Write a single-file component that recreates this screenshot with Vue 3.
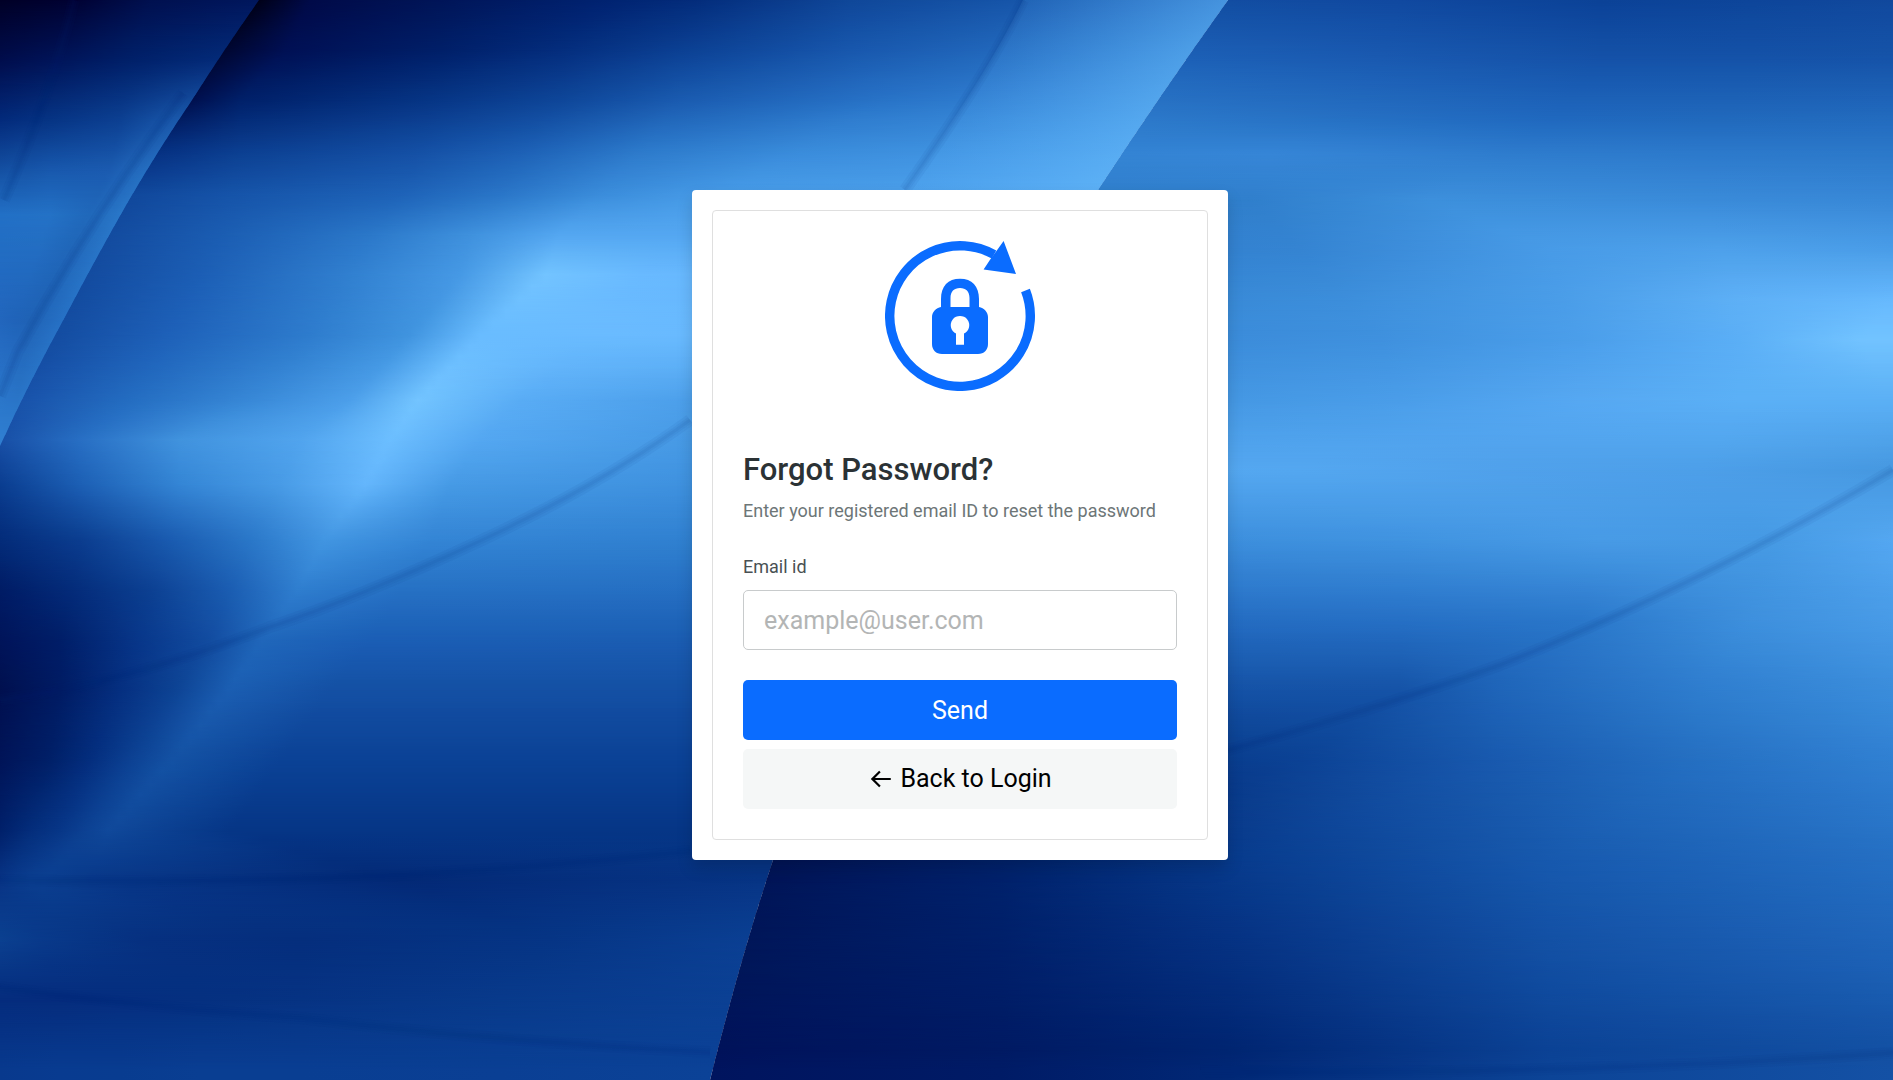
<script setup>
import { ref } from 'vue'

const email = ref('')

// Backdrop colours: each row lists [x, colour] stops along one height.
// Rows of one panel have equally many stops, so both the colour and the
// position of a stop can be carried smoothly from one row to the next.
const panels = [
  {
    id: 'main',
    clip: 'M0 0H1228Q1160 95 1098 190Q870 540 773 860Q740 960 710 1080H0Z',
    rows: [
      { y: 0, stops: [[250, '#000010'], [310, '#000a48'], [440, '#001558'], [600, '#002270'], [700, '#042d7c'], [850, '#0f4799'], [1228, '#2068be']] },
      { y: 50, stops: [[222, '#00062f'], [285, '#001054'], [440, '#001f68'], [560, '#042d7d'], [680, '#0b4093'], [850, '#1857ad'], [1200, '#2f7ed0']] },
      { y: 100, stops: [[190, '#000f4d'], [240, '#002069'], [430, '#063585'], [560, '#0e4699'], [680, '#1a5bb0'], [880, '#2873c7'], [1170, '#3b8ddc']] },
      { y: 150, stops: [[155, '#052f80'], [240, '#0b3e90'], [420, '#144fa4'], [520, '#1c5fb4'], [640, '#2c79ca'], [800, '#398bda'], [1130, '#4599e6']] },
      { y: 195, stops: [[125, '#10479b'], [230, '#1654a9'], [400, '#1e63b8'], [500, '#2a76c8'], [600, '#3b8ddb'], [720, '#489ce8'], [1100, '#4fa3ee']] },
      { y: 235, stops: [[105, '#134b9f'], [220, '#1b5db2'], [370, '#2b78c9'], [470, '#3f91dd'], [560, '#54a7f1'], [690, '#54a7f1'], [1060, '#55a9f2']] },
      { y: 275, stops: [[85, '#134b9f'], [200, '#1c5eb5'], [350, '#3180d0'], [460, '#4699e5'], [545, '#73c4ff'], [640, '#69baff'], [1000, '#5daff8']] },
      { y: 335, stops: [[60, '#144da2'], [170, '#1e61b9'], [310, '#2e7ccd'], [410, '#4094df'], [480, '#69bcff'], [600, '#6abbff'], [900, '#66b8fe']] },
      { y: 400, stops: [[15, '#1851a9'], [130, '#246dc1'], [250, '#3888d7'], [350, '#4c9fea'], [418, '#73c4ff'], [520, '#59acf5'], [800, '#4497e3']] },
      { y: 440, stops: [[0, '#184fa6'], [80, '#286fc4'], [180, '#4193de'], [300, '#51a4ee'], [390, '#6cbeff'], [480, '#54a7f1'], [800, '#4093df']] },
      { y: 485, stops: [[0, '#0a3d90'], [80, '#1c5fb4'], [180, '#3485d5'], [280, '#489be6'], [365, '#64b6fc'], [450, '#469ae5'], [800, '#3b8ddc']] },
      { y: 540, stops: [[0, '#042c7a'], [80, '#0b3d8f'], [170, '#1a5bb0'], [250, '#2a77c8'], [325, '#4296e2'], [430, '#3485d5'], [780, '#2f7fcf']] },
      { y: 590, stops: [[0, '#001c65'], [70, '#042b79'], [150, '#0c4092'], [230, '#1b5db2'], [297, '#2f7ecf'], [400, '#2671c4'], [760, '#256fc2']] },
      { y: 640, stops: [[0, '#00145a'], [60, '#001e68'], [140, '#08378a'], [210, '#124ca0'], [262, '#2067bb'], [370, '#1b5eb5'], [760, '#1b5db2']] },
      { y: 690, stops: [[0, '#00104f'], [60, '#001b63'], [120, '#052f80'], [175, '#0d4394'], [228, '#1b5eb2'], [330, '#1450a4'], [760, '#1450a4']] },
      { y: 760, stops: [[0, '#001458'], [50, '#002068'], [90, '#042e7e'], [130, '#0c4193'], [172, '#1452a4'], [280, '#0b4296'], [760, '#0b4296']] },
      { y: 830, stops: [[0, '#00206a'], [30, '#042d7b'], [60, '#073687'], [85, '#0c4193'], [108, '#10499b'], [230, '#063686'], [760, '#063686']] },
      { y: 880, stops: [[0, '#083485'], [15, '#093a8b'], [30, '#0b3f90'], [45, '#0b3f90'], [90, '#083788'], [400, '#032976'], [760, '#073585']] },
      { y: 940, stops: [[0, '#0b4090'], [40, '#093a8b'], [90, '#073585'], [150, '#063080'], [300, '#052e7d'], [550, '#063585'], [760, '#0b4094']] },
      { y: 1000, stops: [[0, '#052c7d'], [60, '#052c7d'], [120, '#052e7f'], [200, '#053080'], [300, '#063383'], [500, '#083a8b'], [730, '#0b4094']] },
      { y: 1080, stops: [[0, '#083b90'], [60, '#093e93'], [120, '#093e93'], [200, '#0a4095'], [300, '#0a4095'], [500, '#0a4095'], [710, '#0b4297']] }
    ]
  },
  {
    id: 'corner',
    clip: 'M0 0H259Q225 48 192 100Q160 147 129 200Q98 254 67 313Q28 384 0 446Z',
    rows: [
      { y: 0, stops: [[0, '#000026'], [75, '#000233'], [150, '#00104f'], [259, '#00175d']] },
      { y: 60, stops: [[0, '#000d4c'], [60, '#00155a'], [130, '#002069'], [220, '#042b79']] },
      { y: 120, stops: [[0, '#032a7b'], [50, '#063484'], [120, '#0c4092'], [180, '#1b5aad']] },
      { y: 170, stops: [[0, '#1450a2'], [50, '#1858ad'], [110, '#1b5bb0'], [150, '#2670c2']] },
      { y: 215, stops: [[0, '#2270c6'], [50, '#2472c6'], [90, '#2068ba'], [125, '#2b7acb']] },
      { y: 320, stops: [[0, '#2266bd'], [15, '#2063b9'], [30, '#1f62b5'], [65, '#2772c6']] },
      { y: 446, stops: [[0, '#3080d2'], [5, '#3080d2'], [10, '#3080d2'], [20, '#3080d2']] }
    ]
  },
  {
    id: 'right',
    clip: 'M1228 0H1893V1080H710Q740 960 773 860Q870 540 1098 190Q1160 95 1228 0Z',
    rows: [
      { y: 0, stops: [[1228, '#124da2'], [1400, '#1049a0'], [1600, '#0b4297'], [1750, '#0d459a'], [1893, '#11499d']] },
      { y: 60, stops: [[1190, '#1d61b7'], [1380, '#1a5ab1'], [1600, '#1552a9'], [1750, '#1553a9'], [1893, '#1654aa']] },
      { y: 120, stops: [[1150, '#2c79ca'], [1350, '#2671c4'], [1550, '#2069bf'], [1720, '#216abd'], [1893, '#236cbf']] },
      { y: 155, stops: [[1120, '#3484d4'], [1270, '#3686d7'], [1500, '#2f7dce'], [1700, '#2d7acc'], [1893, '#2c79ca']] },
      { y: 200, stops: [[1090, '#2f7ecb'], [1250, '#307fcc'], [1430, '#3d90dc'], [1700, '#3a8bd9'], [1893, '#3888d7']] },
      { y: 250, stops: [[1060, '#317fcd'], [1300, '#3584d2'], [1550, '#489be7'], [1720, '#4ea1eb'], [1893, '#4a9de8']] },
      { y: 300, stops: [[1040, '#3484d2'], [1340, '#3c8edb'], [1560, '#4a9de8'], [1740, '#5eb0f6'], [1893, '#67b9fd']] },
      { y: 340, stops: [[1040, '#3887d6'], [1380, '#3f91de'], [1580, '#4b9eea'], [1740, '#5baff6'], [1860, '#72c3ff']] },
      { y: 400, stops: [[1040, '#3f92dd'], [1400, '#4a9de9'], [1580, '#56a8f2'], [1740, '#5bb0f6'], [1893, '#5bb0f5']] },
      { y: 470, stops: [[1040, '#56a9f2'], [1300, '#54a7f0'], [1500, '#50a1eb'], [1700, '#4d9fe9'], [1893, '#4698e0']] },
      { y: 540, stops: [[1040, '#3a8bda'], [1400, '#4093e0'], [1600, '#489be6'], [1770, '#469ae4'], [1893, '#54a7f1']] },
      { y: 620, stops: [[1040, '#2369bf'], [1400, '#2670c5'], [1580, '#2a77ca'], [1750, '#3e90dd'], [1893, '#489be7']] },
      { y: 690, stops: [[1040, '#1451a5'], [1400, '#1553a7'], [1500, '#1f65b9'], [1700, '#2e7dce'], [1893, '#3b8ddb']] },
      { y: 760, stops: [[1040, '#06337f'], [1300, '#0b4295'], [1500, '#195aaf'], [1700, '#2570c2'], [1893, '#3080d2']] },
      { y: 860, stops: [[770, '#001457'], [1000, '#00226c'], [1228, '#073a8c'], [1550, '#1759ae'], [1893, '#256fc3']] },
      { y: 960, stops: [[735, '#001659'], [1000, '#001f69'], [1228, '#053080'], [1550, '#124fa3'], [1893, '#1d62b7']] },
      { y: 1050, stops: [[715, '#00125a'], [1000, '#001a63'], [1228, '#002571'], [1550, '#0b4295'], [1893, '#1351a4']] },
      { y: 1080, stops: [[710, '#001560'], [1000, '#001c68'], [1228, '#022978'], [1550, '#0d4598'], [1893, '#1551a5']] }
    ]
  }
]

const STEP = 12

const channels = (hex) => [1, 3, 5].map((i) => parseInt(hex.slice(i, i + 2), 16))
const mix = (a, b, t) => a + (b - a) * t
const mixColour = (a, b, t) => {
  const to = channels(b)
  return `rgb(${channels(a).map((c, i) => Math.round(mix(c, to[i], t))).join(' ')})`
}

const sheets = panels.map(({ id, clip, rows }) => {
  const bands = []
  rows.slice(0, -1).forEach((row, r) => {
    const next = rows[r + 1]
    const count = Math.ceil((next.y - row.y) / STEP)
    for (let s = 0; s < count; s++) {
      const t = s / count
      const stops = row.stops.map(([x, colour], i) => ({
        x: mix(x, next.stops[i][0], t),
        colour: mixColour(colour, next.stops[i][1], t)
      }))
      bands.push({ y: Math.round(mix(row.y, next.y, t)), stops })
    }
  })
  return {
    id,
    clip,
    bands: bands.map((band, i) => {
      const x1 = band.stops[0].x
      const x2 = band.stops[band.stops.length - 1].x
      return {
        key: `${id}-${i}`,
        x1,
        x2,
        y: band.y,
        from: i ? bands[i - 1].y : band.y,
        until: i < bands.length - 1 ? bands[i + 1].y : 1080,
        stops: band.stops.map(({ x, colour }) => ({ offset: (x - x1) / (x2 - x1), colour }))
      }
    })
  }
})

const creases = [
  'M690 420Q600 485 480 541T270 627Q130 682 0 700',
  'M0 880Q200 884 400 875Q560 866 690 851',
  'M0 987Q120 1005 300 1018Q500 1042 710 1052',
  'M1023 0Q990 70 905 190',
  'M74 0Q52 90 4 200',
  'M183 93Q90 220 18 351L0 396',
  'M1893 470Q1700 585 1500 665Q1380 708 1228 750',
  'M1200 1071Q1560 1076 1893 1053'
]
</script>

<template>
  <main class="page">
    <svg class="backdrop" viewBox="0 0 1893 1080" preserveAspectRatio="xMidYMid slice" aria-hidden="true">
      <defs>
        <linearGradient id="fade" x1="0" y1="0" x2="0" y2="1">
          <stop offset="0" stop-color="#fff" stop-opacity="0" />
          <stop offset="1" stop-color="#fff" />
        </linearGradient>
        <mask id="fade-in" class="fade-in" maskContentUnits="objectBoundingBox" x="0" y="0" width="1" height="1">
          <rect width="1" height="1" fill="url(#fade)" />
        </mask>
        <linearGradient id="sheen" gradientUnits="userSpaceOnUse" x1="950" y1="60" x2="1120" y2="170">
          <stop offset="0" stop-color="#5db4ff" stop-opacity="0.08" />
          <stop offset="1" stop-color="#6cc0ff" stop-opacity="0.5" />
        </linearGradient>
        <template v-for="sheet in sheets" :key="sheet.id">
          <clipPath :id="`clip-${sheet.id}`"><path :d="sheet.clip" /></clipPath>
          <linearGradient
            v-for="band in sheet.bands"
            :id="band.key"
            :key="band.key"
            gradientUnits="userSpaceOnUse"
            :x1="band.x1"
            y1="0"
            :x2="band.x2"
            y2="0"
          >
            <stop v-for="(stop, i) in band.stops" :key="i" :offset="stop.offset" :stop-color="stop.colour" />
          </linearGradient>
        </template>
      </defs>
      <g v-for="sheet in sheets" :key="sheet.id" :clip-path="`url(#clip-${sheet.id})`">
        <template v-for="band in sheet.bands" :key="band.key">
          <rect
            v-if="band.y > band.from"
            x="0"
            :y="band.from"
            width="1893"
            :height="band.y - band.from"
            :fill="`url(#${band.key})`"
            mask="url(#fade-in)"
          />
          <rect x="0" :y="band.y" width="1893" :height="band.until - band.y" :fill="`url(#${band.key})`" />
        </template>
      </g>
      <path d="M1023 0H1228Q1160 95 1098 190H905Q990 70 1023 0Z" fill="url(#sheen)" />
      <g v-for="d in creases" :key="d" class="crease">
        <path :d="d" stroke-width="12" />
        <path :d="d" stroke-width="7" />
        <path :d="d" stroke-width="3" />
      </g>
    </svg>

    <section class="card">
      <form class="panel" @submit.prevent>
        <svg class="emblem" viewBox="0 0 150 150" aria-hidden="true">
          <path d="M140.5 49.5A70.3 70.3 0 1 1 109 13.5" fill="none" stroke="currentColor" stroke-width="9.4" />
          <path d="M118.6 0L131 33L98.6 28.5L105.7 17.7L112 9.3Z" fill="currentColor" />
          <path
            fill="currentColor"
            fill-rule="evenodd"
            d="M56 66V58C56 45 63 37.7 75 37.7S94 45 94 58V66C99 67 103 71 103 76V103C103 109 99 113 93 113H57C51 113 47 109 47 103V76C47 71 51 67 56 66ZM65.5 66H84.5V57C84.5 50.5 81 47 75 47S65.5 50.5 65.5 57ZM71 92.6V103.7H79V92.6A9.3 9.3 0 1 0 71 92.6Z"
          />
        </svg>
        <h1 class="title">Forgot Password?</h1>
        <p class="hint">Enter your registered email ID to reset the password</p>
        <label class="label" for="email">Email id</label>
        <input id="email" v-model="email" class="field" type="email" placeholder="example@user.com" />
        <button class="button primary" type="submit">Send</button>
        <a class="button light" href="#login">
          <svg class="arrow" viewBox="0 0 24 24" aria-hidden="true">
            <path d="M21 11H6.414l5.293-5.293-1.414-1.414L2.586 12l7.707 7.707 1.414-1.414L6.414 13H21z" fill="currentColor" />
          </svg>
          Back to Login
        </a>
      </form>
    </section>
  </main>
</template>

<style>
body {
  margin: 0;
}
</style>

<style scoped>
.page {
  position: relative;
  display: flex;
  align-items: center;
  justify-content: center;
  box-sizing: border-box;
  min-height: 100vh;
  padding: 0 0 30px 27px;
  overflow: hidden;
  font-family: Roboto, 'Liberation Sans', sans-serif;
  font-size: 18px;
  line-height: 28px;
}

.backdrop {
  position: absolute;
  inset: 0;
  width: 100%;
  height: 100%;
}

.fade-in {
  mask-type: alpha;
}

.crease {
  fill: none;
  stroke: #001f70;
  stroke-opacity: 0.05;
}

.card {
  position: relative;
  box-sizing: border-box;
  width: 100%;
  max-width: 536px;
  padding: 20px;
  border-radius: 4px;
  background: #fff;
  box-shadow: 0 8px 16px rgba(0, 0, 0, 0.15);
}

.panel {
  display: flex;
  flex-direction: column;
  padding: 30px;
  border: 1px solid #dfdfdf;
  border-radius: 4px;
}

.emblem {
  align-self: center;
  width: 150px;
  height: 150px;
  margin-bottom: 60px;
  color: #0a6cff;
}

.title {
  margin: 0 0 8px;
  color: #2b3235;
  font-size: 31px;
  font-weight: 500;
  line-height: 38px;
}

.hint {
  margin: 0 0 28px;
  color: #6d7677;
}

.label {
  margin-bottom: 9px;
  color: #495053;
}

.field,
.button {
  box-sizing: border-box;
  width: 100%;
  height: 60px;
  border-radius: 5px;
  font-family: inherit;
  font-size: 25px;
}

.field {
  margin-bottom: 30px;
  padding: 0 20px;
  border: 1px solid #c8cbcc;
  background: #fff;
  color: #495053;
}

.field::placeholder {
  color: #b3b5b5;
  opacity: 1;
}

.button {
  display: flex;
  align-items: center;
  justify-content: center;
  gap: 6px;
  border: 0;
  text-decoration: none;
  cursor: pointer;
}

.primary {
  margin-bottom: 9px;
  background: #0a6cff;
  color: #fff;
}

.light {
  background: #f5f7f7;
  color: #000;
}

.arrow {
  width: 26px;
  height: 26px;
}
</style>
